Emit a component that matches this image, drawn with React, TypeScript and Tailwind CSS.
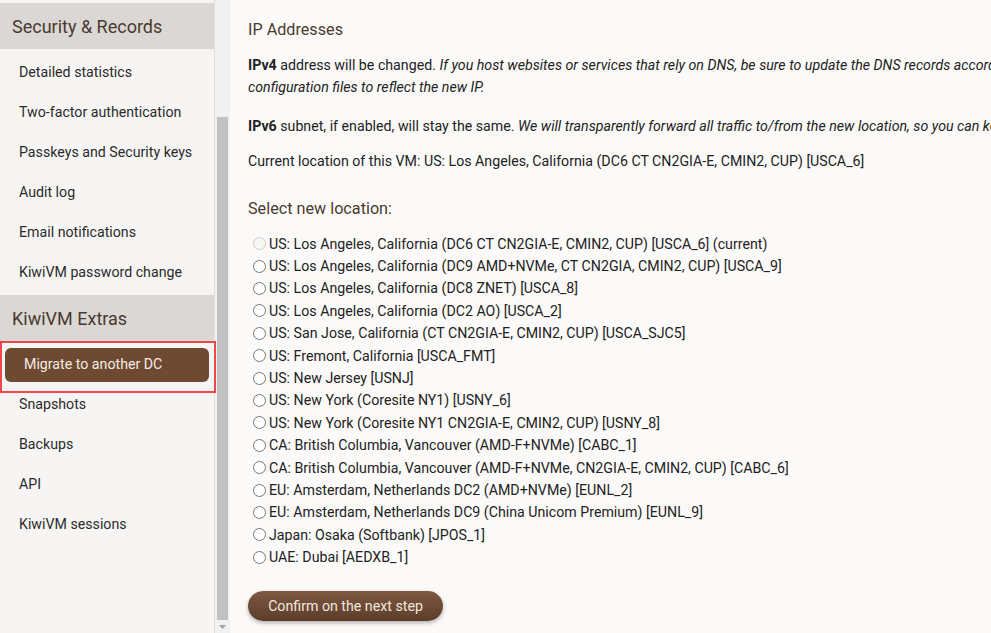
import React from 'react';

const font = { fontFamily: 'Roboto, "Liberation Sans", sans-serif' };

const topItems = [
  'Detailed statistics',
  'Two-factor authentication',
  'Passkeys and Security keys',
  'Audit log',
  'Email notifications',
  'KiwiVM password change',
];

const extraItems = ['Snapshots', 'Backups', 'API', 'KiwiVM sessions'];

const locations = [
  'US: Los Angeles, California (DC6 CT CN2GIA-E, CMIN2, CUP) [USCA_6] (current)',
  'US: Los Angeles, California (DC9 AMD+NVMe, CT CN2GIA, CMIN2, CUP) [USCA_9]',
  'US: Los Angeles, California (DC8 ZNET) [USCA_8]',
  'US: Los Angeles, California (DC2 AO) [USCA_2]',
  'US: San Jose, California (CT CN2GIA-E, CMIN2, CUP) [USCA_SJC5]',
  'US: Fremont, California [USCA_FMT]',
  'US: New Jersey [USNJ]',
  'US: New York (Coresite NY1) [USNY_6]',
  'US: New York (Coresite NY1 CN2GIA-E, CMIN2, CUP) [USNY_8]',
  'CA: British Columbia, Vancouver (AMD-F+NVMe) [CABC_1]',
  'CA: British Columbia, Vancouver (AMD-F+NVMe, CN2GIA-E, CMIN2, CUP) [CABC_6]',
  'EU: Amsterdam, Netherlands DC2 (AMD+NVMe) [EUNL_2]',
  'EU: Amsterdam, Netherlands DC9 (China Unicom Premium) [EUNL_9]',
  'Japan: Osaka (Softbank) [JPOS_1]',
  'UAE: Dubai [AEDXB_1]',
];

const SideHeader = ({ children, className = '' }: { children: React.ReactNode; className?: string }) => (
  <div className={`h-[46px] mb-[4px] flex items-center pl-3 bg-[#dbd7d4] text-[18px] text-[#4a3a2f] ${className}`}>
    {children}
  </div>
);

const SideItem = ({ children }: { children: React.ReactNode }) => (
  <div className="h-10 flex items-center pl-[19px] text-[14.2px] text-[#2b2b2b]">{children}</div>
);

const App = () => {
  return (
    <div className="flex h-[633px] w-[991px] overflow-hidden bg-[#fbfaf9]" style={font}>
      {/* Sidebar */}
      <aside className="w-[215px] shrink-0 bg-[#f6f5f4] border-r border-[#e2dfdc] relative z-10">
        <SideHeader className="mt-[3px]">Security &amp; Records</SideHeader>
        {topItems.map((it) => (
          <SideItem key={it}>{it}</SideItem>
        ))}
        <SideHeader className="mt-[2px]">KiwiVM Extras</SideHeader>
        <div className="relative h-10 flex items-center px-[5px]">
          <div className="w-full h-[34px] rounded-[6px] bg-[#6e4a33] text-[#f3ebe3] text-[14.2px] flex items-center pl-[19px]">
            Migrate to another DC
          </div>
          {/* highlight annotation */}
          <div className="absolute left-0 -right-[2px] -top-[4px] -bottom-[8px] border-2 border-[#f0474a] pointer-events-none" />
        </div>
        {extraItems.map((it) => (
          <SideItem key={it}>{it}</SideItem>
        ))}
      </aside>

      {/* Scrollbar */}
      <div className="w-[15px] shrink-0 bg-[#f1f1f1] flex flex-col items-center">
        <div className="h-[117px] shrink-0" />
        <div className="w-[11px] flex-1 bg-[#c1c1c1]" />
        <div className="h-[13px] shrink-0 flex items-center justify-center">
          <svg width="7" height="4" viewBox="0 0 7 4">
            <path d="M0 0h7L3.5 4z" fill="#a3a3a3" />
          </svg>
        </div>
      </div>

      {/* Main */}
      <main className="flex-1 min-w-0 pl-[18px] pt-[18px] text-[14.2px] text-[#222] leading-[22.4px] whitespace-nowrap">
        <h2 className="text-[16.2px] leading-6 text-[#4a3a2f] mb-[12px]">IP Addresses</h2>
        <p className="mb-[16px]">
          <b>IPv4</b> address will be changed.{' '}
          <i>
            If you host websites or services that rely on DNS, be sure to update the DNS records accordingly and update any
            <br />
            configuration files to reflect the new IP.
          </i>
        </p>
        <p className="mb-[13px]">
          <b>IPv6</b> subnet, if enabled, will stay the same.{' '}
          <i>We will transparently forward all traffic to/from the new location, so you can keep using the same addresses.</i>
        </p>
        <p>Current location of this VM: US: Los Angeles, California (DC6 CT CN2GIA-E, CMIN2, CUP) [USCA_6]</p>

        <h3 className="mt-[24px] mb-3 text-[16.2px] leading-6 text-[#4a3a2f]">Select new location:</h3>
        <div className="flex flex-col">
          {locations.map((loc, i) => (
            <label key={loc} className="flex items-center h-[22.4px]">
              <input type="radio" name="loc" disabled={i === 0} className="ml-[5px] mr-[3px] w-[13px] h-[13px]" />
              <span>{loc}</span>
            </label>
          ))}
        </div>

        <button className="mt-[23px] h-[30px] w-[195px] rounded-full bg-gradient-to-b from-[#7e5842] to-[#5c3d2a] text-[#f1e7de] text-[14.2px] shadow-[0_2px_4px_rgba(0,0,0,0.3)]">
          Confirm on the next step
        </button>
      </main>
    </div>
  );
};

export default App;
